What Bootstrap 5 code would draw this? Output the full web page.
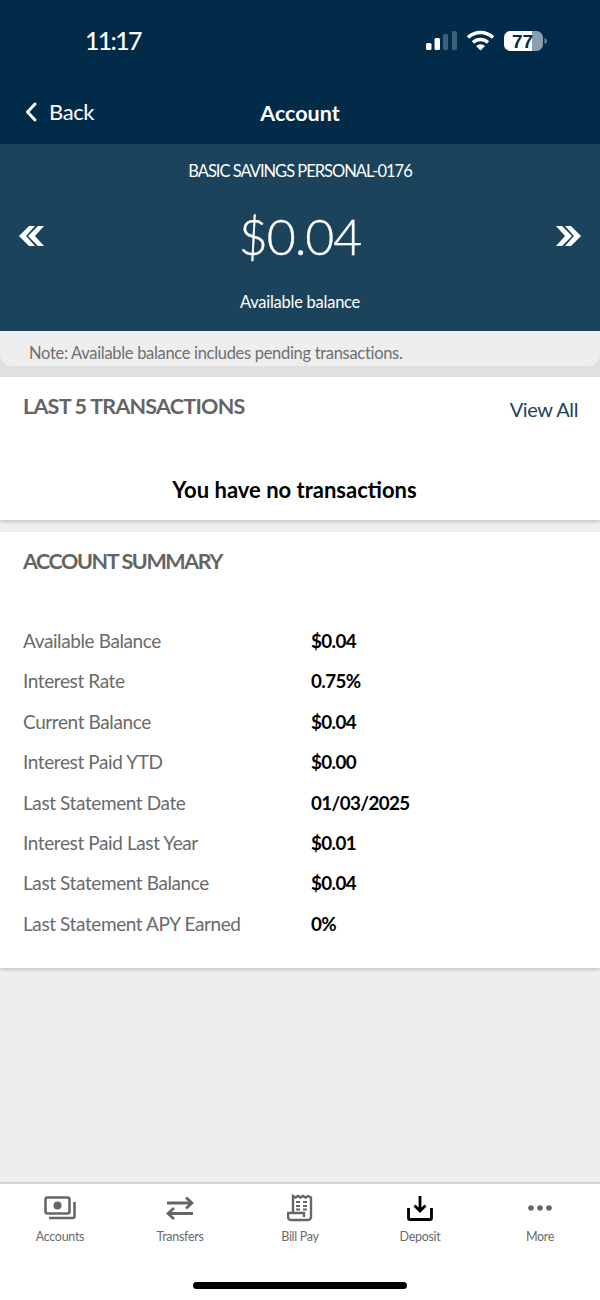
<!DOCTYPE html>
<html lang="en">
<head>
    <meta charset="UTF-8">
    <meta name="viewport" content="width=device-width, initial-scale=1.0">
    <title>Account</title>
    <link href="https://cdn.jsdelivr.net/npm/bootstrap@5.3.0/dist/css/bootstrap.min.css" rel="stylesheet">
    <style>
        body {
            font-family: "Lato", "Liberation Sans", sans-serif;
            background: #eeeeee;
            width: 600px;
            height: 1300px;
            overflow: hidden;
        }
        .app-screen { height: 1300px; }
        .top-bar { background: #012b49; height: 144px; color: #fff; }
        .status-row { height: 84px; padding: 0 53px 2px 85px; }
        .clock { font-size: 25px; font-weight: 500; line-height: 1; letter-spacing: -1.7px; margin-bottom: 2px; }
        .nav-row { height: 60px; padding: 0 24px 4px; position: relative; }
        .back-label { font-size: 22px; line-height: 1; letter-spacing: -.4px; margin-left: 3px; }
        .nav-title { font-size: 21.500px; font-weight: 700; position: absolute; left: 0; right: 0; top: 17px; text-align: center; line-height: 1.2; }
        .balance-band { background: #1c435c; height: 187px; color: #fff; padding: 0 18px; }
        .acct-name { font-size: 16.500px; padding-top: 17px; line-height: 21px; letter-spacing: -1px; }
        .balance-row { height: 88px; padding-top: 20px; }
        .balance-amount { font-size: 50px; font-weight: 300; line-height: 1; letter-spacing: -1px; -webkit-text-stroke: .4px #fff; }
        .avail-label { font-size: 16.500px; line-height: 21px; padding-top: 22px; letter-spacing: -.25px; }
        .note-bar {
            height: 46px;
            background: #e0e0e0;
        }
        .note-text {
            height: 35px;
            background: #eeeeee;
            border-radius: 0 0 12px 12px;
            color: #6f6f6f;
            font-size: 16.500px;
            padding: 10px 0 0 29px;
            line-height: 24px;
            letter-spacing: -.31px;
        }
        .panel-white { background: #fff; box-shadow: 0 2px 3px rgba(0,0,0,.16); }
        .panel-tx { height: 143px; padding: 14px 22px 0 23px; }
        .panel-summary { height: 436px; margin-top: 12px; padding: 14px 23px 0; }
        .panel-heading { color: #646464; font-size: 21.500px; font-weight: 700; line-height: 30px; letter-spacing: -.75px; }
        .panel-summary .panel-heading { letter-spacing: -1.400px; }
        .view-all { color: #1c435c; font-size: 20px; line-height: 30px; text-decoration: none; margin-top: 3px; letter-spacing: -.4px; }
        .empty-msg { font-size: 22px; font-weight: 700; color: #000; text-align: center; margin-top: 51px; padding-right: 12px; line-height: 30px; }
        .summary-list { margin-top: 45px; }
        .summary-line { height: 40.400px; display: flex; align-items: center; font-size: 19px; }
        .summary-key { width: 289px; color: #6a6a6a; letter-spacing: -.4px; }
        .summary-val { color: #000; font-weight: 700; font-size: 18.800px; letter-spacing: -.6px; }
        .summary-line .summary-val { margin-left: -1px; }
        .tab-bar { background: #fff; height: 118px; border-top: 2px solid #d4d4d4; margin-top: auto; position: relative; }
        .tab-cell { width: 120px; padding-top: 9px; color: #6a6a6a; font-size: 12.500px; text-align: center; line-height: 18px; letter-spacing: -.3px; }
        .tab-icon { height: 30px; display: flex; justify-content: center; align-items: center; margin-bottom: 5px; }
        .home-pill { position: absolute; left: 193px; bottom: 11px; width: 214px; height: 7px; background: #000; border-radius: 4px; }
    </style>
</head>
<body>
    <div class="app-screen d-flex flex-column">
        <div class="top-bar">
            <div class="status-row d-flex justify-content-between align-items-center">
                <div class="clock">11:17</div>
                <svg width="122" height="26" viewBox="0 0 122 26">
                    <g fill="#fff">
                        <rect x="1" y="15" width="5.500" height="7" rx="1.500"/>
                        <rect x="9.500" y="10" width="5.500" height="12" rx="1.500"/>
                    </g>
                    <rect x="18" y="6" width="5" height="16" rx="1.500" fill="#3e5f78"/>
                    <rect x="27" y="3" width="5" height="19" rx="1.500" fill="#3e5f78"/>
                    <g fill="none" stroke="#fff" stroke-width="3.600">
                        <path d="M43 9.500a18 18 0 0 1 25 0"/>
                        <path d="M48 14.500a11 11 0 0 1 15 0"/>
                    </g>
                    <path d="M51 18a6.500 6.500 0 0 1 9 0L55.500 22.500z" fill="#fff"/>
                    <rect x="79" y="3" width="39" height="20" rx="6.500" fill="#8a9fb0"/>
                    <path d="M85.500 3H107v20H85.500a6.500 6.500 0 0 1-6.500-6.500v-7A6.500 6.500 0 0 1 85.500 3z" fill="#fff"/>
                    <path d="M119.500 10c1.500.5 2.500 1.500 2.500 3s-1 2.500-2.500 3z" fill="#6f8699"/>
                    <text x="97.500" y="20" text-anchor="middle" font-family="Liberation Sans" font-weight="700" font-size="19" fill="#012b49">77</text>
                </svg>
            </div>
            <div class="nav-row d-flex align-items-center">
                <svg class="me-2" width="14" height="22" viewBox="0 0 14 22"><path d="M11 3 3.500 11 11 19" fill="none" stroke="#fff" stroke-width="3" stroke-linecap="round" stroke-linejoin="round"/></svg>
                <span class="back-label">Back</span>
                <div class="nav-title">Account</div>
            </div>
        </div>

        <div class="balance-band text-center">
            <div class="acct-name">BASIC SAVINGS PERSONAL-0176</div>
            <div class="balance-row d-flex justify-content-between align-items-center">
                <svg width="26" height="22" viewBox="0 0 26 22"><path d="M11 1 1 11l10 10h6L8 11l9-10zM20 1 10 11l10 10h6l-9-10 9-10z" fill="#fff"/></svg>
                <div class="balance-amount">$0.04</div>
                <svg width="26" height="22" viewBox="0 0 26 22"><path d="M15 1l10 10-10 10H9l9-10L9 1zM6 1l10 10L6 21H0l9-10L0 1z" fill="#fff"/></svg>
            </div>
            <div class="avail-label">Available balance</div>
        </div>

        <div class="note-bar">
            <div class="note-text">Note: Available balance includes pending transactions.</div>
        </div>

        <div class="panel-white panel-tx">
            <div class="d-flex justify-content-between align-items-start">
                <div class="panel-heading">LAST 5 TRANSACTIONS</div>
                <a class="view-all" href="#">View All</a>
            </div>
            <div class="empty-msg">You have no transactions</div>
        </div>

        <div class="panel-white panel-summary">
            <div class="panel-heading">ACCOUNT SUMMARY</div>
            <div class="summary-list" id="summaryList"></div>
        </div>

        <div class="tab-bar d-flex">
            <div class="tab-cell">
                <div class="tab-icon">
                    <svg width="32" height="24" viewBox="0 0 32 24" fill="none" stroke="#666" stroke-width="2.600"><rect x="1.500" y="1.500" width="24" height="16" rx="2"/><circle cx="13.500" cy="9.500" r="4" fill="#666" stroke="none"/><path d="M30.500 6v14a2 2 0 0 1-2 2H5"/></svg>
                </div>
                Accounts
            </div>
            <div class="tab-cell">
                <div class="tab-icon">
                    <svg width="28" height="24" viewBox="0 0 28 24" fill="none" stroke="#666" stroke-width="2.800"><path d="M1 7h24M20 1.500 26 7l-6 5.500"/><path d="M27 17.500H3M8 12 2 17.500 8 23"/></svg>
                </div>
                Transfers
            </div>
            <div class="tab-cell">
                <div class="tab-icon">
                    <svg width="26" height="28" viewBox="0 0 26 28" fill="none" stroke="#666" stroke-width="2.400"><path d="M6 18V2l2.500 1.500L11 2l2.500 1.500L16 2l2.500 1.500L21 2l3 1.500V23a3 3 0 0 1-3 3H4a3 3 0 0 1-3-3v-4h16v4"/><path d="M9 8h4M9 12h4M9 15.500h4M16 8h4M16 12h4M16 15.500h4" stroke-width="2"/></svg>
                </div>
                Bill Pay
            </div>
            <div class="tab-cell">
                <div class="tab-icon">
                    <svg width="26" height="26" viewBox="0 0 26 26" fill="none" stroke="#000" stroke-width="2.800"><path d="M13 1v14M7.500 10.500 13 16l5.500-5.500"/><path d="M1.500 13v10a1.500 1.500 0 0 0 1.500 1.500h20a1.500 1.500 0 0 0 1.500-1.500V13"/></svg>
                </div>
                Deposit
            </div>
            <div class="tab-cell">
                <div class="tab-icon">
                    <svg width="24" height="6" viewBox="0 0 24 6" fill="#666"><circle cx="3" cy="3" r="2.800"/><circle cx="12" cy="3" r="2.800"/><circle cx="21" cy="3" r="2.800"/></svg>
                </div>
                More
            </div>
            <div class="home-pill"></div>
        </div>
    </div>

    <script>
        // Account summary rows
        const summaryRows = [
            ["Available Balance", "$0.04"],
            ["Interest Rate", "0.75%"],
            ["Current Balance", "$0.04"],
            ["Interest Paid YTD", "$0.00"],
            ["Last Statement Date", "01/03/2025"],
            ["Interest Paid Last Year", "$0.01"],
            ["Last Statement Balance", "$0.04"],
            ["Last Statement APY Earned", "0%"]
        ];
        document.getElementById("summaryList").innerHTML = summaryRows.map((r) => `
            <div class="summary-line"><span class="summary-key">${r[0]}</span><span class="summary-val">${r[1]}</span></div>
        `).join("");
    </script>
    <script src="https://cdn.jsdelivr.net/npm/bootstrap@5.3.0/dist/js/bootstrap.bundle.min.js"></script>
</body>
</html>
